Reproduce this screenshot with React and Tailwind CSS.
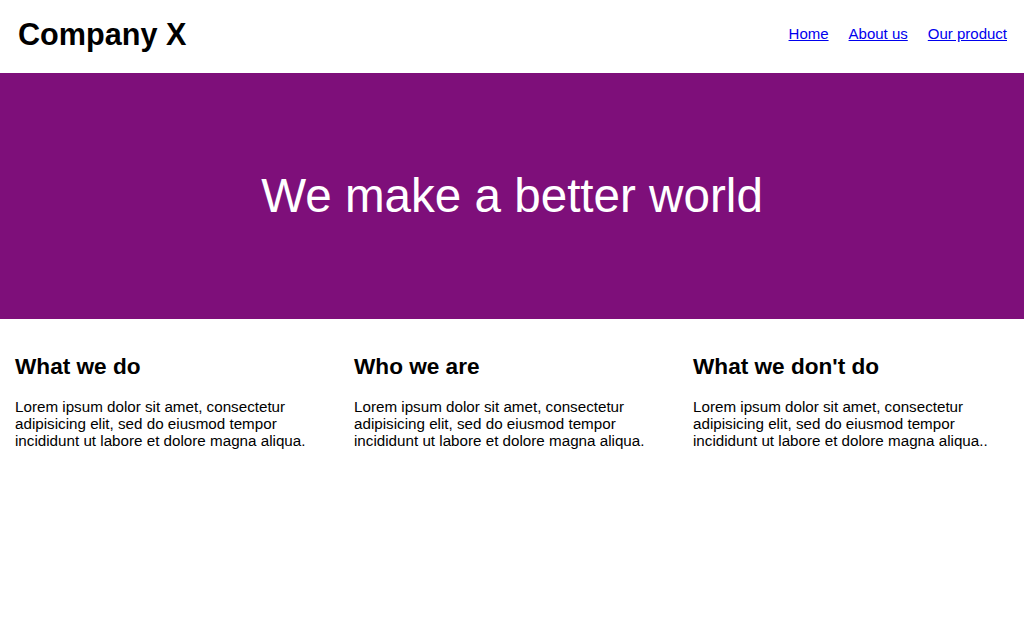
const columns = [
  {
    title: "What we do",
    text: "Lorem ipsum dolor sit amet, consectetur adipisicing elit, sed do eiusmod tempor incididunt ut labore et dolore magna aliqua.",
  },
  {
    title: "Who we are",
    text: "Lorem ipsum dolor sit amet, consectetur adipisicing elit, sed do eiusmod tempor incididunt ut labore et dolore magna aliqua.",
  },
  {
    title: "What we don't do",
    text: "Lorem ipsum dolor sit amet, consectetur adipisicing elit, sed do eiusmod tempor incididunt ut labore et dolore magna aliqua..",
  },
];

const App = () => {
  return (
    <div
      className="min-h-screen bg-white text-black"
      style={{ fontFamily: '"Liberation Sans", Arial, sans-serif' }}
    >
      <header className="h-[73px] flex items-center justify-between pl-[18px] pr-[17px] pb-[5px]">
        <h1 className="text-[30.6px] font-bold leading-none">Company X</h1>
        <nav className="flex items-center gap-[20px] text-[15px] text-[#0000ee]">
          <a href="#" className="underline">
            Home
          </a>
          <a href="#" className="underline">
            About us
          </a>
          <a href="#" className="underline">
            Our product
          </a>
        </nav>
      </header>

      <section className="h-[246px] bg-[#7e0f7a] flex items-center justify-center">
        <h2 className="text-white text-[47.6px] leading-none">
          We make a better world
        </h2>
      </section>

      <section className="grid grid-cols-3 gap-x-[23px] px-[15px] pt-[34px]">
        {columns.map((col) => (
          <div key={col.title}>
            <h3 className="text-[22.6px] font-bold leading-[28px]">
              {col.title}
            </h3>
            <p className="mt-[17px] text-[15.2px] leading-[17px]">{col.text}</p>
          </div>
        ))}
      </section>
    </div>
  );
};

export default App;
